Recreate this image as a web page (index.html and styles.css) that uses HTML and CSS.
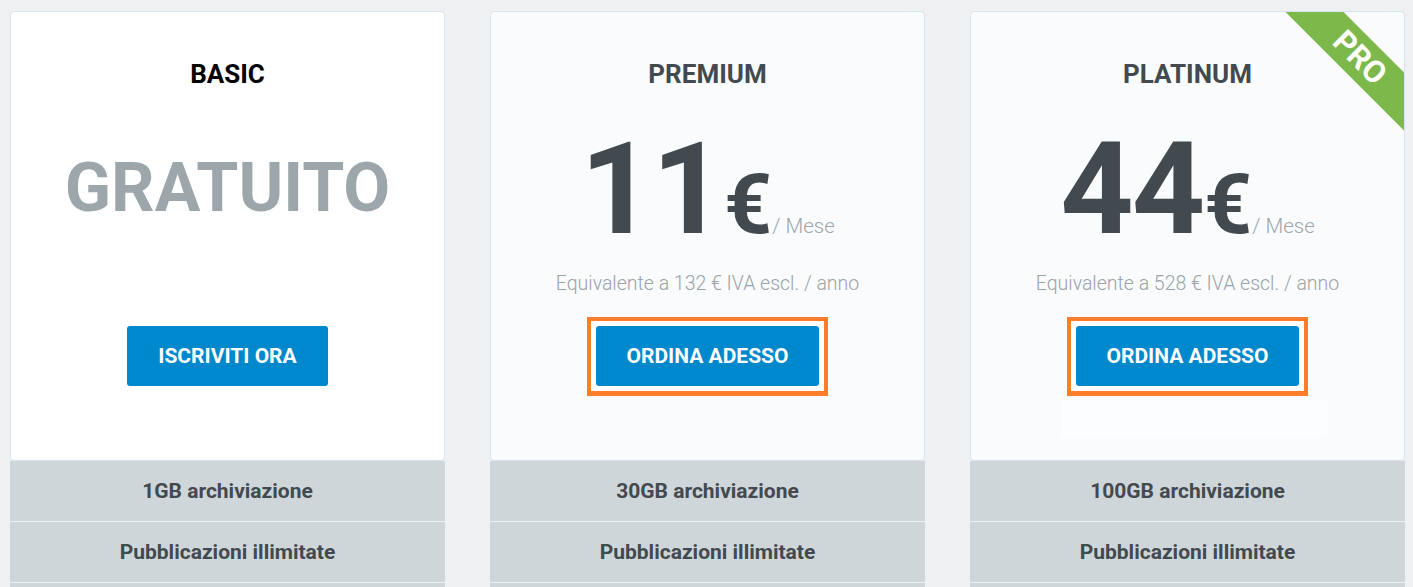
FILE: index.html
```html
<!DOCTYPE html>
<html lang="it">
<head>
<meta charset="utf-8">
<title>Piani</title>
<link rel="stylesheet" href="styles.css">
</head>
<body>
<div class="plans">
  <div class="plan plan-basic">
    <div class="plan-top">
      <div class="plan-title title-black">BASIC</div>
      <div class="price-row">
        <span class="free">GRATUITO</span>
      </div>
      <div class="plan-sub"></div>
      <div class="btn-wrap"><a class="btn">ISCRIVITI ORA</a></div>
    </div>
    <ul class="features">
      <li>1GB archiviazione</li>
      <li>Pubblicazioni illimitate</li>
      <li class="feature-empty"></li>
    </ul>
  </div>

  <div class="plan plan-alt">
    <div class="plan-top">
      <div class="plan-title">PREMIUM</div>
      <div class="price-row">
        <span class="amount">11</span><span class="currency">€</span><span class="period">/ Mese</span>
      </div>
      <div class="plan-sub">Equivalente a 132 € IVA escl. / anno</div>
      <div class="btn-wrap focus-ring"><a class="btn">ORDINA ADESSO</a></div>
    </div>
    <ul class="features">
      <li>30GB archiviazione</li>
      <li>Pubblicazioni illimitate</li>
      <li class="feature-empty"></li>
    </ul>
  </div>

  <div class="plan plan-alt">
    <div class="plan-top">
      <div class="ribbon">PRO</div>
      <div class="plan-title">PLATINUM</div>
      <div class="price-row">
        <span class="amount">44</span><span class="currency">€</span><span class="period">/ Mese</span>
      </div>
      <div class="plan-sub">Equivalente a 528 € IVA escl. / anno</div>
      <div class="btn-wrap focus-ring"><a class="btn">ORDINA ADESSO</a></div>
      <div class="ghost"></div>
    </div>
    <ul class="features">
      <li>100GB archiviazione</li>
      <li>Pubblicazioni illimitate</li>
      <li class="feature-empty"></li>
    </ul>
  </div>
</div>
</body>
</html>
```

FILE: styles.css
```css
html, body {
  margin: 0;
  padding: 0;
  background: #eff0f2;
  font-family: Roboto, "Liberation Sans", Arial, sans-serif;
  overflow: hidden;
}

.plans {
  display: flex;
  gap: 45px;
  padding: 11px 0 0 10px;
}

.plan {
  width: 435px;
  flex: 0 0 435px;
}

.plan-top {
  position: relative;
  overflow: hidden;
  height: 448px;
  box-sizing: content-box;
  border: 1px solid #d6e4ef;
  border-radius: 4px;
  background: #ffffff;
  display: flex;
  flex-direction: column;
  align-items: center;
}

.plan-alt .plan-top {
  background: #f9fbfd;
}

.plan-title {
  margin-top: 48px;
  height: 28px;
  line-height: 28px;
  font-size: 26px;
  font-weight: 700;
  color: #434a4f;
}

.title-black {
  color: #000;
}

.price-row {
  margin-top: 37px;
  height: 128px;
  display: flex;
  align-items: baseline;
  justify-content: center;
  color: #434a4f;
}

.free {
  margin-top: 29px;
  font-size: 68px;
  line-height: 1;
  font-weight: 700;
  color: #9da6ab;
}

.amount {
  font-size: 128px;
  line-height: 1;
  font-weight: 700;
  letter-spacing: -2px;
}

.currency {
  font-size: 84px;
  line-height: 1;
  font-weight: 700;
  margin-left: 1px;
  letter-spacing: -2px;
}

.period {
  font-size: 20.5px;
  line-height: 1;
  font-weight: 300;
  color: #9da6ab;
  margin-left: 2px;
}

.plan-sub {
  margin-top: 19px;
  height: 24px;
  line-height: 24px;
  font-size: 19.5px;
  font-weight: 300;
  color: #9aa3a8;
}

.btn-wrap {
  margin-top: 30px;
}

.focus-ring {
  margin-top: 21px;
  border: 4px solid #fd7e2a;
  border-bottom-width: 5px;
  padding: 5px;
  background: #ffffff;
}

.btn {
  display: block;
  height: 60px;
  line-height: 60px;
  padding: 0 31px;
  background: #0088cc;
  color: #fff;
  border-radius: 3px;
  font-size: 21px;
  font-weight: 700;
  text-decoration: none;
}

.ghost {
  margin-top: 4px;
  margin-left: 14px;
  width: 265px;
  height: 38px;
  background: #fcfdfe;
}

.ribbon {
  position: absolute;
  left: 289px;
  top: 25px;
  width: 200px;
  height: 41px;
  line-height: 41px;
  background: #7cb84a;
  color: #fff;
  font-size: 31px;
  font-weight: 700;
  text-align: center;
  transform: rotate(45deg);
}

.features {
  list-style: none;
  margin: 0;
  padding: 0;
}

.features li {
  height: 60px;
  line-height: 60px;
  border-bottom: 1px solid #eef1f3;
  background: #cfd6da;
  text-align: center;
  font-size: 21px;
  font-weight: 700;
  color: #434a4f;
}
```
